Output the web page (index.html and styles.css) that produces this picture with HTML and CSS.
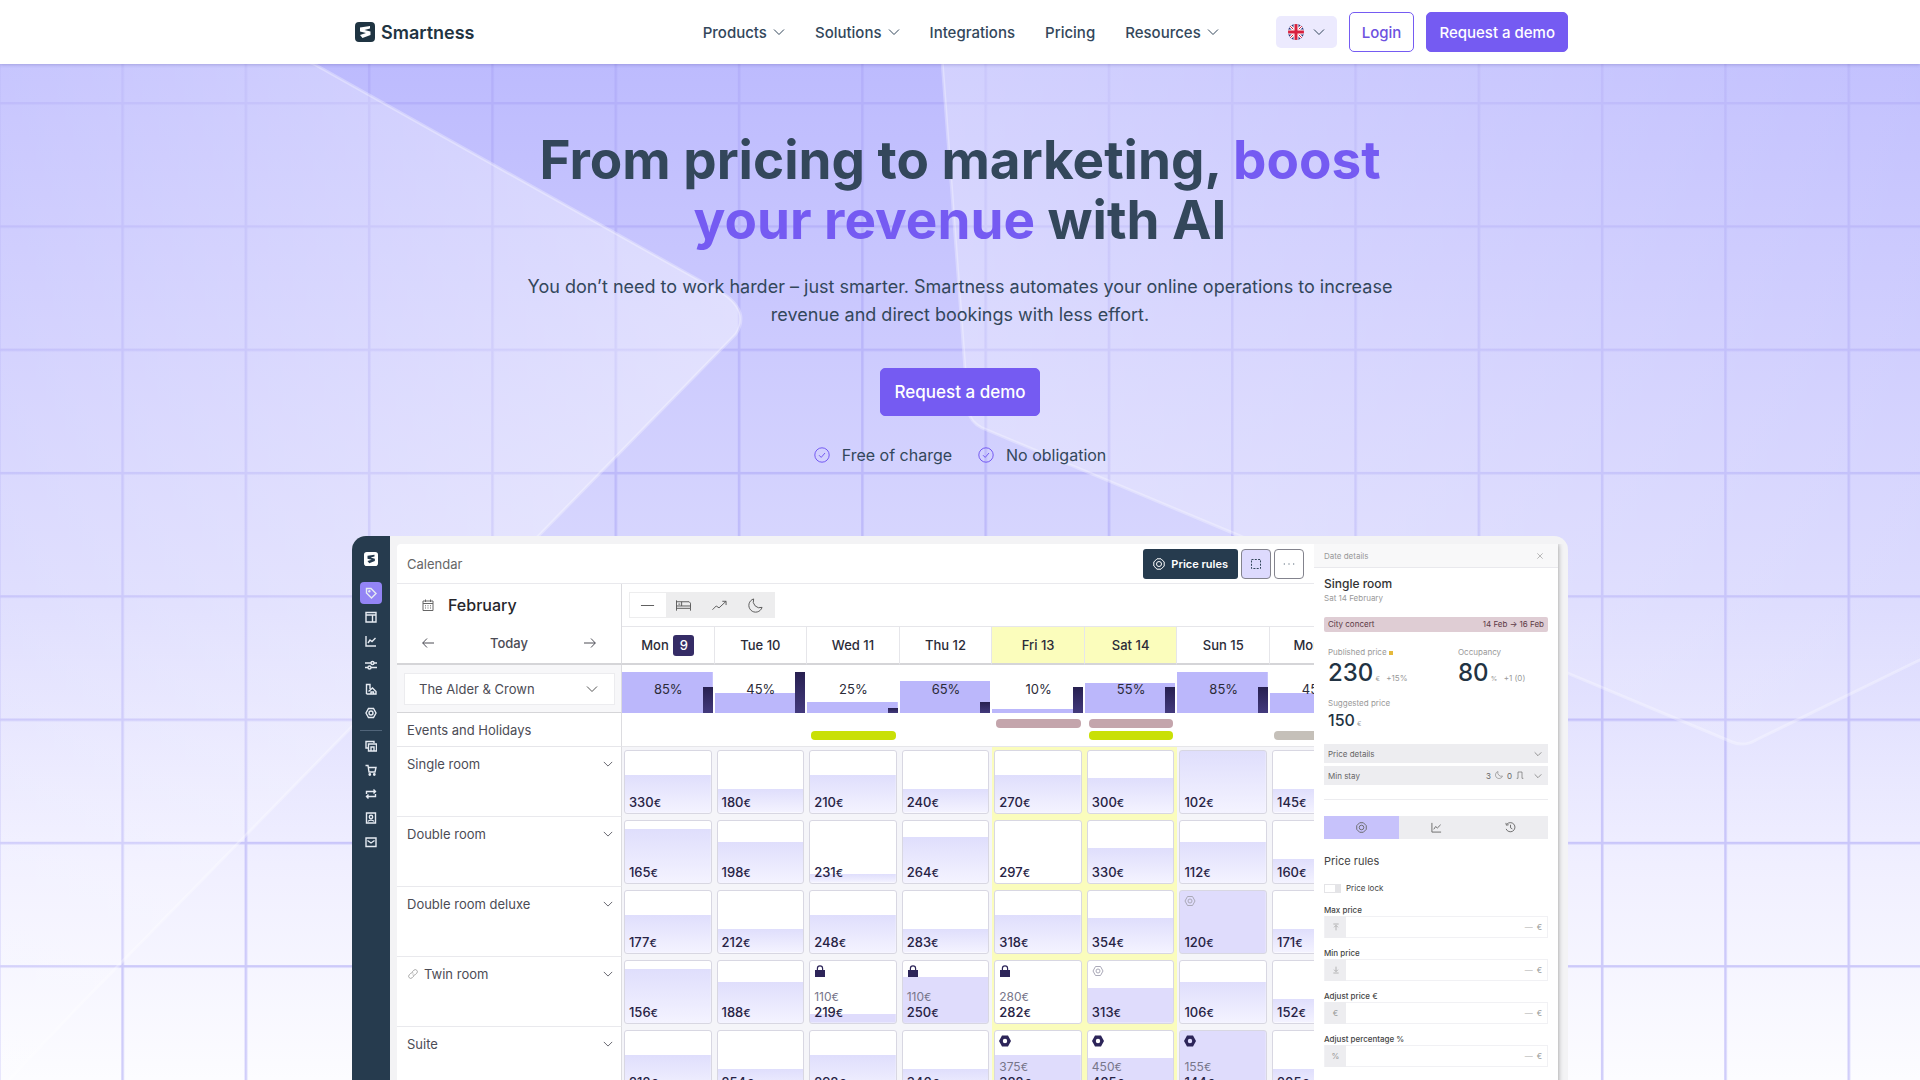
FILE: index.html
```html
<!DOCTYPE html>
<html lang="en">
<head>
    <meta charset="UTF-8">
    <meta name="viewport" content="width=device-width, initial-scale=1.0">
    <title>Smartness</title>
    <link rel="stylesheet" href="styles.css">
</head>
<body>

    <!-- Icons -->
    <svg class="sprite" aria-hidden="true">
        <symbol id="i-logo" viewBox="0 0 20 20"><path fill-rule="evenodd" d="M4 0h12a4 4 0 0 1 4 4v12a4 4 0 0 1-4 4H4a4 4 0 0 1-4-4V4a4 4 0 0 1 4-4zM5 5.500v4l6 1.500-6 2 2.500 3 8-3V9.500L9.500 8 15 6.500V4z"/></symbol>
        <symbol id="i-down" viewBox="0 0 12 12"><path d="M1 3.500l5 5 5-5"/></symbol>
        <symbol id="i-check" viewBox="0 0 16 16"><circle cx="8" cy="8" r="7.200"/><path d="M5 8.200l2.200 2.200L11 6"/></symbol>
        <symbol id="i-tag" viewBox="0 0 12 12"><path d="M1.500 1.500h4.500l5 5-4.500 4.500-5-5z"/><circle cx="4.300" cy="4.300" r=".6"/></symbol>
        <symbol id="i-layout" viewBox="0 0 12 12"><path d="M1 1.500h10v9.500H1zM1 4h10M7.500 4v7"/></symbol>
        <symbol id="i-chart" viewBox="0 0 12 12"><path d="M1 1v10h10M3 8l2-3 2 1.500L10.500 3"/></symbol>
        <symbol id="i-sliders" viewBox="0 0 12 12"><path d="M0 4h6M9 4h3M0 8.500h3M6 8.500h6"/><circle cx="7.500" cy="4" r="1.500"/><circle cx="4.500" cy="8.500" r="1.500"/></symbol>
        <symbol id="i-house" viewBox="0 0 12 12"><path d="M1.500 11V1.500H5V6M3.500 8.500L7.500 5l3.500 3.500V11H1.500M6 11V9h2.500v2"/></symbol>
        <symbol id="i-gear" viewBox="0 0 12 12"><path d="M3.500 1.500h5L11 6l-2.500 4.500h-5L1 6z"/><circle cx="6" cy="6" r="2"/></symbol>
        <symbol id="i-target" viewBox="0 0 12 12"><path d="M4 .800h4L11.200 4v4L8 11.200H4L.800 8V4z"/><circle cx="6" cy="6" r="2.500"/></symbol>
        <symbol id="i-copy" viewBox="0 0 12 12"><path d="M3 8H1V1.500h8V3M3.500 4h8v7h-8zM6 11V7h3v4"/></symbol>
        <symbol id="i-cart" viewBox="0 0 12 12"><path d="M.500 1.500H3L4 8h6l1-4.500H3.400"/><circle cx="4.800" cy="10.500" r=".7"/><circle cx="9.300" cy="10.500" r=".7"/></symbol>
        <symbol id="i-repeat" viewBox="0 0 12 12"><path d="M1.500 6V3.500h9M8.500 1.500l2 2-2 2M10.500 6v2.500h-9M3.500 6.500l-2 2 2 2"/></symbol>
        <symbol id="i-contact" viewBox="0 0 12 12"><path d="M1.500 1h9v10h-9z"/><circle cx="6" cy="5" r="1.700"/><path d="M3 9.500c1-1.800 5-1.800 6 0"/></symbol>
        <symbol id="i-mail" viewBox="0 0 12 12"><path d="M1 2h10v8.500H1zM2.500 4.500L6 7l3.500-2.500"/></symbol>
        <symbol id="i-calendar" viewBox="0 0 12 12"><path d="M1 2h10v9.500H1zM1 4.500h10M3.500.500v2.500M8.500.500v2.500M3 6.800h1M5.500 6.800h1M8 6.800h1M3 9h1M5.500 9h1M8 9h1"/></symbol>
        <symbol id="i-left" viewBox="0 0 12 12"><path d="M12 6H.700M5 1.500L.700 6 5 10.500"/></symbol>
        <symbol id="i-right" viewBox="0 0 12 12"><path d="M0 6h11.300M7 1.500L11.300 6 7 10.500"/></symbol>
        <symbol id="i-minus" viewBox="0 0 16 16"><path d="M1 8h14"/></symbol>
        <symbol id="i-bed" viewBox="0 0 16 16"><path d="M.500 2.500v11M.500 11h15v2.500M15.500 11V5.500L14 4H.500M.500 8.500h15M6 4v4.500M2.500 6.500h2"/></symbol>
        <symbol id="i-trend" viewBox="0 0 16 16"><path d="M.500 12.500l4-4 3 2L15 3.500M11 3.500h4v4"/></symbol>
        <symbol id="i-moon" viewBox="0 0 16 16"><path d="M6 1a7.200 7.200 0 1 0 9 9A7 7 0 0 1 6 1z"/></symbol>
        <symbol id="i-select" viewBox="0 0 12 12"><path stroke-dasharray="2 1.300" d="M1.500 1.500h9v9h-9z"/></symbol>
        <symbol id="i-more" viewBox="0 0 12 12"><path d="M.800 6h1M5.500 6h1M10.200 6h1"/></symbol>
        <symbol id="i-close" viewBox="0 0 12 12"><path d="M2 2l8 8M10 2l-8 8"/></symbol>
        <symbol id="i-lock" viewBox="0 0 12 12"><path d="M1 5h10v7H1zM2.800 5V3.500a3.200 3.200 0 0 1 6.400 0V5H8V3.500a2 2 0 0 0-4 0V5z"/></symbol>
        <symbol id="i-nut" viewBox="0 0 12 12"><path fill-rule="evenodd" d="M3 .500h6L12 6l-3 5.500H3L0 6zM6 3.800a2.200 2.200 0 1 0 0 4.400 2.200 2.200 0 0 0 0-4.400z"/></symbol>
        <symbol id="i-link" viewBox="0 0 12 12"><path d="M5 3.500l2-2a2.300 2.300 0 0 1 3.500 3.500l-2 2a2.300 2.300 0 0 1-3 0M7 8.500l-2 2A2.300 2.300 0 0 1 1.500 7l2-2a2.300 2.300 0 0 1 3 0"/></symbol>
        <symbol id="i-history" viewBox="0 0 12 12"><path d="M2 2.500A5 5 0 1 1 1.200 7.500M1 1l.500 2.500L4 3M6 3v3.300l2 1.200"/></symbol>
        <symbol id="i-max" viewBox="0 0 12 12"><path d="M2 1.500h8M6 11V4M3 6.500L6 3.500l3 3"/></symbol>
        <symbol id="i-min" viewBox="0 0 12 12"><path d="M2 10.500h8M6 1v7M3 5.500l3 3 3-3"/></symbol>
        <symbol id="i-door" viewBox="0 0 12 12"><path d="M3 11V1.500h6V11M1 11h2M9 11h2"/></symbol>
    </svg>

    <header class="header">
        <div class="header-inner">
            <a class="logo" href="#"><svg class="logo-mark"><use href="#i-logo"/></svg>Smartness</a>
            <nav class="nav">
                <a href="#">Products <svg class="icon"><use href="#i-down"/></svg></a>
                <a href="#">Solutions <svg class="icon"><use href="#i-down"/></svg></a>
                <a href="#">Integrations</a>
                <a href="#">Pricing</a>
                <a href="#">Resources <svg class="icon"><use href="#i-down"/></svg></a>
            </nav>
            <div class="actions">
                <button type="button" class="lang" aria-label="English">
                    <svg class="flag" viewBox="0 0 16 16">
                        <clipPath id="round"><circle cx="8" cy="8" r="8"/></clipPath>
                        <g clip-path="url(#round)">
                            <path class="flag-field" d="M0 0h16v16H0z"/>
                            <path stroke="#fff" stroke-width="3" d="M0 0l16 16M16 0L0 16"/>
                            <path stroke="#d8203f" stroke-width="1" d="M0 0l16 16M16 0L0 16"/>
                            <path stroke="#fff" stroke-width="5" d="M8 0v16M0 8h16"/>
                            <path stroke="#d8203f" stroke-width="3" d="M8 0v16M0 8h16"/>
                        </g>
                    </svg>
                    <svg class="icon"><use href="#i-down"/></svg>
                </button>
                <a class="btn btn-outline" href="#">Login</a>
                <a class="btn" href="#">Request a demo</a>
            </div>
        </div>
    </header>

    <main class="hero">
        <svg class="hero-bg" viewBox="0 0 1920 1016" preserveAspectRatio="xMidYMin slice" aria-hidden="true">
            <defs>
                <pattern id="grid" x="-2" y="38" width="123.300" height="123.300" patternUnits="userSpaceOnUse">
                    <path fill="none" stroke="#aaa6f6" stroke-opacity=".55" stroke-width="2.500" d="M0 1.300h123.300M1.300 0v123.300"/>
                </pattern>
                <linearGradient id="pane-left" x1="0" y1="0" x2="1" y2="0">
                    <stop offset="0" stop-color="#fff" stop-opacity=".15"/>
                    <stop offset="1" stop-color="#fff" stop-opacity=".42"/>
                </linearGradient>
                <linearGradient id="pane-right" x1="0" y1="0" x2="1" y2="0">
                    <stop offset="0" stop-color="#fff" stop-opacity=".32"/>
                    <stop offset="1" stop-color="#fff" stop-opacity=".08"/>
                </linearGradient>
            </defs>
            <rect width="1920" height="1016" fill="url(#grid)" stroke="none"/>
            <path class="pane" fill="url(#pane-left)" d="M-10-116L314 0l410 230q26 18 12 40L75 946-10 1036z"/>
            <path class="pane" fill="url(#pane-right)" d="M942-4l26 350q2 12 14 18l258 108 492 206q12 5 24-2L1930 591V-4z"/>
        </svg>

        <h1>From pricing to marketing, <span>boost</span><br><span>your revenue</span> with AI</h1>
        <p class="lead">You don’t need to work harder – just smarter. Smartness automates your online operations to increase<br>revenue and direct bookings with less effort.</p>
        <a class="btn btn-large" href="#">Request a demo</a>
        <ul class="perks">
            <li><svg><use href="#i-check"/></svg>Free of charge</li>
            <li><svg><use href="#i-check"/></svg>No obligation</li>
        </ul>

        <div class="app">
            <nav class="sidebar">
                <a class="sidebar-logo" href="#" aria-label="Home"><svg><use href="#i-logo"/></svg></a>
                <a class="active" href="#" aria-label="Pricing"><svg><use href="#i-tag"/></svg></a>
                <a href="#" aria-label="Layout"><svg><use href="#i-layout"/></svg></a>
                <a href="#" aria-label="Reports"><svg><use href="#i-chart"/></svg></a>
                <a href="#" aria-label="Strategy"><svg><use href="#i-sliders"/></svg></a>
                <a href="#" aria-label="Properties"><svg><use href="#i-house"/></svg></a>
                <a href="#" aria-label="Settings"><svg><use href="#i-gear"/></svg></a>
                <hr>
                <a href="#" aria-label="Rates"><svg><use href="#i-copy"/></svg></a>
                <a href="#" aria-label="Shop"><svg><use href="#i-cart"/></svg></a>
                <a href="#" aria-label="Sync"><svg><use href="#i-repeat"/></svg></a>
                <a href="#" aria-label="Guests"><svg><use href="#i-contact"/></svg></a>
                <a href="#" aria-label="Messages"><svg><use href="#i-mail"/></svg></a>
            </nav>

            <section class="calendar">
                <div class="topbar">
                    <span class="topbar-title">Calendar</span>
                    <button type="button" class="rules"><svg><use href="#i-target"/></svg>Price rules</button>
                    <button type="button" class="square on" aria-label="Select dates"><svg><use href="#i-select"/></svg></button>
                    <button type="button" class="square" aria-label="More"><svg><use href="#i-more"/></svg></button>
                </div>

                <table>
                    <thead>
                        <tr class="tools">
                            <th class="side"><div class="month"><svg><use href="#i-calendar"/></svg>February</div></th>
                            <td colspan="8">
                                <div class="modes">
                                    <button type="button" class="on" aria-label="None"><svg><use href="#i-minus"/></svg></button>
                                    <button type="button" aria-label="Rooms"><svg><use href="#i-bed"/></svg></button>
                                    <button type="button" aria-label="Trend"><svg><use href="#i-trend"/></svg></button>
                                    <button type="button" aria-label="Nights"><svg><use href="#i-moon"/></svg></button>
                                </div>
                            </td>
                        </tr>
                        <tr class="days">
                            <th class="side">
                                <div class="pager">
                                    <button type="button" aria-label="Previous"><svg><use href="#i-left"/></svg></button>
                                    <button type="button">Today</button>
                                    <button type="button" aria-label="Next"><svg><use href="#i-right"/></svg></button>
                                </div>
                            </th>
                            <th>Mon <span class="today">9</span></th>
                            <th>Tue 10</th>
                            <th>Wed 11</th>
                            <th>Thu 12</th>
                            <th class="weekend">Fri 13</th>
                            <th class="weekend">Sat 14</th>
                            <th>Sun 15</th>
                            <th>Mon 16</th>
                        </tr>
                    </thead>
                    <tbody>
                        <tr class="occupancy">
                            <th class="side">
                                <select aria-label="Property"><option>The Alder &amp; Crown</option></select>
                            </th>
                            <td><div class="occ" style="--fill: 41px"><span>85%</span><i style="height: 26px"></i></div></td>
                            <td><div class="occ" style="--fill: 20px"><span>45%</span><i style="height: 41px"></i></div></td>
                            <td><div class="occ" style="--fill: 11px"><span>25%</span><i style="height: 5px"></i></div></td>
                            <td><div class="occ" style="--fill: 32px"><span>65%</span><i style="height: 11px"></i></div></td>
                            <td><div class="occ" style="--fill: 4px"><span>10%</span><i style="height: 26px"></i></div></td>
                            <td><div class="occ" style="--fill: 30px"><span>55%</span><i style="height: 26px"></i></div></td>
                            <td><div class="occ" style="--fill: 41px"><span>85%</span><i style="height: 26px"></i></div></td>
                            <td><div class="occ" style="--fill: 20px"><span>45%</span><i style="height: 41px"></i></div></td>
                        </tr>
                        <tr class="events">
                            <th class="side">Events and Holidays</th>
                            <td></td>
                            <td></td>
                            <td><div class="event"></div><div class="event green"></div></td>
                            <td></td>
                            <td><div class="event pink"></div><div class="event"></div></td>
                            <td><div class="event pink"></div><div class="event green"></div></td>
                            <td></td>
                            <td><div class="event"></div><div class="event grey"></div></td>
                        </tr>
                        <tr class="room">
                            <th class="side"><div>Single room <svg><use href="#i-down"/></svg></div></th>
                            <td><div class="cell" style="--fill: 61%"><b>330<small>€</small></b></div></td>
                            <td><div class="cell" style="--fill: 38%"><b>180<small>€</small></b></div></td>
                            <td><div class="cell" style="--fill: 61%"><b>210<small>€</small></b></div></td>
                            <td><div class="cell" style="--fill: 38%"><b>240<small>€</small></b></div></td>
                            <td class="weekend"><div class="cell" style="--fill: 61%"><b>270<small>€</small></b></div></td>
                            <td class="weekend"><div class="cell" style="--fill: 56%"><b>300<small>€</small></b></div></td>
                            <td><div class="cell" style="--fill: 100%"><b>102<small>€</small></b></div></td>
                            <td><div class="cell" style="--fill: 38%"><b>145<small>€</small></b></div></td>
                        </tr>
                        <tr class="room">
                            <th class="side"><div>Double room <svg><use href="#i-down"/></svg></div></th>
                            <td><div class="cell" style="--fill: 87%"><b>165<small>€</small></b></div></td>
                            <td><div class="cell" style="--fill: 66%"><b>198<small>€</small></b></div></td>
                            <td><div class="cell" style="--fill: 14%"><b>231<small>€</small></b></div></td>
                            <td><div class="cell" style="--fill: 74%"><b>264<small>€</small></b></div></td>
                            <td class="weekend"><div class="cell" style="--fill: 0%"><b>297<small>€</small></b></div></td>
                            <td class="weekend"><div class="cell" style="--fill: 56%"><b>330<small>€</small></b></div></td>
                            <td><div class="cell" style="--fill: 66%"><b>112<small>€</small></b></div></td>
                            <td><div class="cell" style="--fill: 39%"><b>160<small>€</small></b></div></td>
                        </tr>
                        <tr class="room">
                            <th class="side"><div>Double room deluxe <svg><use href="#i-down"/></svg></div></th>
                            <td><div class="cell" style="--fill: 61%"><b>177<small>€</small></b></div></td>
                            <td><div class="cell" style="--fill: 38%"><b>212<small>€</small></b></div></td>
                            <td><div class="cell" style="--fill: 61%"><b>248<small>€</small></b></div></td>
                            <td><div class="cell" style="--fill: 38%"><b>283<small>€</small></b></div></td>
                            <td class="weekend"><div class="cell" style="--fill: 61%"><b>318<small>€</small></b></div></td>
                            <td class="weekend"><div class="cell" style="--fill: 56%"><b>354<small>€</small></b></div></td>
                            <td><div class="cell solid" style="--fill: 100%"><svg class="line"><use href="#i-gear"/></svg><b>120<small>€</small></b></div></td>
                            <td><div class="cell" style="--fill: 38%"><b>171<small>€</small></b></div></td>
                        </tr>
                        <tr class="room">
                            <th class="side"><div><svg class="link"><use href="#i-link"/></svg>Twin room <svg><use href="#i-down"/></svg></div></th>
                            <td><div class="cell" style="--fill: 87%"><b>156<small>€</small></b></div></td>
                            <td><div class="cell" style="--fill: 66%"><b>188<small>€</small></b></div></td>
                            <td><div class="cell solid" style="--fill: 14%"><svg><use href="#i-lock"/></svg><s>110<small>€</small></s><b>219<small>€</small></b></div></td>
                            <td><div class="cell solid" style="--fill: 74%"><svg><use href="#i-lock"/></svg><s>110<small>€</small></s><b>250<small>€</small></b></div></td>
                            <td class="weekend"><div class="cell" style="--fill: 0%"><svg><use href="#i-lock"/></svg><s>280<small>€</small></s><b>282<small>€</small></b></div></td>
                            <td class="weekend"><div class="cell solid" style="--fill: 56%"><svg class="line"><use href="#i-gear"/></svg><b>313<small>€</small></b></div></td>
                            <td><div class="cell" style="--fill: 66%"><b>106<small>€</small></b></div></td>
                            <td><div class="cell" style="--fill: 38%"><b>152<small>€</small></b></div></td>
                        </tr>
                        <tr class="room">
                            <th class="side"><div>Suite <svg><use href="#i-down"/></svg></div></th>
                            <td><div class="cell" style="--fill: 61%"><b>212<small>€</small></b></div></td>
                            <td><div class="cell" style="--fill: 38%"><b>254<small>€</small></b></div></td>
                            <td><div class="cell" style="--fill: 61%"><b>298<small>€</small></b></div></td>
                            <td><div class="cell" style="--fill: 38%"><b>340<small>€</small></b></div></td>
                            <td class="weekend"><div class="cell solid" style="--fill: 61%"><svg><use href="#i-nut"/></svg><s>375<small>€</small></s><b>382<small>€</small></b></div></td>
                            <td class="weekend"><div class="cell solid" style="--fill: 56%"><svg><use href="#i-nut"/></svg><s>450<small>€</small></s><b>425<small>€</small></b></div></td>
                            <td><div class="cell solid" style="--fill: 100%"><svg><use href="#i-nut"/></svg><s>155<small>€</small></s><b>144<small>€</small></b></div></td>
                            <td><div class="cell" style="--fill: 38%"><b>205<small>€</small></b></div></td>
                        </tr>
                    </tbody>
                </table>
            </section>

            <aside class="details">
                <div class="details-head">Date details <button type="button" aria-label="Close"><svg><use href="#i-close"/></svg></button></div>
                <div class="details-body">
                    <h2>Single room</h2>
                    <p class="date">Sat 14 February</p>
                    <div class="concert"><span>City concert</span><span>14 Feb → 16 Feb</span></div>

                    <div class="stats">
                        <div>
                            <p>Published price <i class="dot"></i></p>
                            <strong>230</strong> <small>€</small> <em>+15%</em>
                        </div>
                        <div>
                            <p>Occupancy</p>
                            <strong>80</strong> <small>%</small> <em>+1 (0)</em>
                        </div>
                        <div class="suggested">
                            <p>Suggested price</p>
                            <strong>150</strong> <small>€</small>
                        </div>
                    </div>

                    <button type="button" class="fold">Price details <svg><use href="#i-down"/></svg></button>
                    <button type="button" class="fold">Min stay <span>3 <svg><use href="#i-moon"/></svg> 0 <svg><use href="#i-door"/></svg></span><svg><use href="#i-down"/></svg></button>
                    <hr>

                    <div class="tabs">
                        <button type="button" class="on" aria-label="Rules"><svg><use href="#i-target"/></svg></button>
                        <button type="button" aria-label="Chart"><svg><use href="#i-chart"/></svg></button>
                        <button type="button" aria-label="History"><svg><use href="#i-history"/></svg></button>
                    </div>

                    <h3>Price rules</h3>
                    <label class="switch"><input type="checkbox">Price lock</label>

                    <label class="field-label" for="max">Max price</label>
                    <div class="field"><span><svg><use href="#i-max"/></svg></span><input type="text" id="max" placeholder="—"> €</div>
                    <label class="field-label" for="min">Min price</label>
                    <div class="field"><span><svg><use href="#i-min"/></svg></span><input type="text" id="min" placeholder="—"> €</div>
                    <label class="field-label" for="adjust">Adjust price €</label>
                    <div class="field"><span>€</span><input type="text" id="adjust" placeholder="—"> €</div>
                    <label class="field-label" for="percent">Adjust percentage %</label>
                    <div class="field"><span>%</span><input type="text" id="percent" placeholder="—"> €</div>
                </div>
            </aside>
        </div>
    </main>

</body>
</html>
```
FILE: styles.css
```css
* {
    margin: 0;
    padding: 0;
    box-sizing: border-box;
}

body {
    font-family: "Inter", "Liberation Sans", sans-serif;
    color: #33475b;
    background: #fff;
}

a {
    color: inherit;
    text-decoration: none;
}

button, input, select {
    font: inherit;
    color: inherit;
    background: none;
    border: none;
}

button {
    cursor: pointer;
}

svg {
    fill: none;
    stroke: currentColor;
    flex: none;
}

.sprite {
    display: none;
}

.icon {
    width: 12px;
    height: 12px;
}

/* Header */
.header {
    background: #fff;
    box-shadow: 0 1px 3px rgba(60, 50, 140, 0.25);
    position: relative;
    z-index: 2;
}

.header-inner {
    max-width: 1216px;
    height: 64px;
    margin: 0 auto;
    display: flex;
    align-items: center;
}

.logo {
    display: flex;
    align-items: center;
    gap: 6px;
    margin-left: 3px;
    font-size: 18px;
    font-weight: 600;
    color: #1f3442;
}

.logo-mark {
    width: 20px;
    height: 20px;
    fill: #1f3442;
    stroke: none;
}

.nav {
    display: flex;
    gap: 30px;
    margin-left: auto;
    margin-right: 57px;
    font-size: 15px;
    font-weight: 500;
}

.nav a {
    display: flex;
    align-items: center;
    gap: 6px;
}

.actions {
    display: flex;
    align-items: center;
    gap: 12px;
}

.lang {
    display: flex;
    align-items: center;
    gap: 9px;
    height: 32px;
    padding: 0 12px;
    border-radius: 5px;
    background: #eceafe;
}

.flag {
    width: 16px;
    height: 16px;
}

.flag-field {
    fill: #29337a;
    stroke: none;
}

.btn {
    display: flex;
    align-items: center;
    justify-content: center;
    height: 40px;
    padding: 0 12px;
    border: 1px solid #755bf2;
    border-radius: 5px;
    background: #755bf2;
    color: #fff;
    font-size: 15px;
    font-weight: 500;
}

.btn-outline {
    background: #fff;
    color: #6d52e0;
}

.btn-large {
    width: 160px;
    height: 48px;
    margin: 39px auto 25px;
    font-size: 17px;
}

/* Hero */
.hero {
    position: relative;
    padding: 66px 16px 0;
    overflow: hidden;
    background: linear-gradient(#bdbbfe, #cac8fe 240px, #dad9fe 540px, #f0efff 800px, #fcfcff 1016px);
}

.hero-bg {
    position: absolute;
    top: 0;
    left: 0;
    width: 100%;
    height: 1016px;
}

.pane {
    stroke: #fff;
    stroke-opacity: 0.3;
    stroke-width: 3px;
}

.hero > :not(.hero-bg) {
    position: relative;
}

h1 {
    text-align: center;
    font-size: 53px;
    line-height: 60px;
    font-weight: 700;
}

h1 span {
    color: #755bf2;
}

.lead {
    margin-top: 23px;
    text-align: center;
    font-size: 18px;
    line-height: 28px;
}

.perks {
    display: flex;
    justify-content: center;
    gap: 26px;
    list-style: none;
    font-size: 16px;
    line-height: 28px;
}

.perks li {
    display: flex;
    align-items: center;
    gap: 12px;
}

.perks svg {
    width: 16px;
    height: 16px;
    color: #755bf2;
}

/* App preview */
.app {
    display: flex;
    max-width: 1216px;
    margin: 67px auto 0;
    padding-right: 10px;
    border-radius: 14px 14px 0 0;
    overflow: hidden;
    background: #f3f3f5;
}

.sidebar {
    width: 38px;
    flex: none;
    display: flex;
    flex-direction: column;
    align-items: center;
    padding-top: 16px;
    background: #263b4e;
    color: #e6ebf2;
}

.sidebar a {
    display: flex;
    align-items: center;
    justify-content: center;
    width: 22px;
    height: 22px;
    margin-bottom: 2px;
    border-radius: 4px;
}

.sidebar svg {
    width: 12px;
    height: 12px;
    stroke-width: 1.4px;
}

.sidebar a.sidebar-logo {
    height: 14px;
    margin-bottom: 16px;
}

.sidebar-logo svg {
    width: 14px;
    height: 14px;
    fill: #fff;
    stroke: none;
}

.sidebar a.active {
    background: #9384f5;
}

.sidebar hr {
    width: 22px;
    margin: 4px 0;
    border: none;
    border-top: 1px solid #51657a;
}

.calendar {
    flex: 1;
    min-width: 0;
    margin: 8px 0 0 7px;
    overflow: hidden;
    border-top-left-radius: 4px;
    background: #fff;
    font-size: 13px;
}

.topbar {
    display: flex;
    align-items: center;
    gap: 3px;
    height: 40px;
    padding: 0 10px;
    border-bottom: 1px solid #e9e9ed;
}

.topbar-title {
    margin-right: auto;
    color: #666;
}

.rules {
    display: flex;
    align-items: center;
    gap: 6px;
    height: 30px;
    padding: 0 10px;
    border-radius: 3px;
    background: #263b4e;
    color: #fff;
    font-size: 11px;
    font-weight: 600;
}

.rules svg {
    width: 12px;
    height: 12px;
}

.square {
    display: flex;
    align-items: center;
    justify-content: center;
    width: 30px;
    height: 30px;
    border: 1px solid #83838d;
    border-radius: 4px;
}

.square.on {
    background: #dddafd;
}

.square svg {
    width: 12px;
    height: 12px;
}

/* the last day runs out under the details panel */
table {
    width: 105.3%;
    table-layout: fixed;
    border-collapse: separate;
    border-spacing: 0;
}

th, td {
    font-weight: 500;
    color: #2b2b38;
    vertical-align: middle;
    text-align: center;
}

.side {
    width: 23.3%;
    padding-left: 10px;
    border-right: 1px solid #dcdce0;
    text-align: left;
    font-weight: 400;
    color: #4c4c55;
}

.tools th, .tools td {
    height: 42px;
}

.month {
    display: flex;
    align-items: center;
    gap: 14px;
    padding-left: 15px;
    font-size: 16px;
    font-weight: 500;
    color: #26262c;
}

.month svg {
    width: 12px;
    height: 12px;
    color: #666;
}

.modes {
    display: inline-flex;
    margin-left: 7px;
    padding: 1px;
    background: #ededee;
}

.tools td {
    text-align: left;
}

.modes button {
    display: flex;
    align-items: center;
    justify-content: center;
    width: 36px;
    height: 24px;
    color: #555;
}

.modes .on {
    background: #fff;
}

.modes svg {
    width: 15px;
    height: 15px;
}

.days th {
    height: 39px;
    border-bottom: 2px solid #d5d5d8;
}

.days th + th {
    border-top: 1px solid #e6e6ea;
    border-right: 1px solid #e6e6ea;
}

.days .weekend {
    background: #fbfdbc;
}

.today {
    display: inline-block;
    width: 21px;
    margin-left: 1px;
    border-radius: 3px;
    background: #352c66;
    color: #fff;
    line-height: 21px;
}

.pager {
    display: flex;
    justify-content: space-between;
    padding: 0 25px 3px 15px;
}

.pager button {
    display: flex;
    align-items: center;
    font-weight: 500;
}

.pager svg {
    width: 12px;
    height: 12px;
}

.occupancy .side {
    padding: 0 6px 0 7px;
    background: #f7f7f9;
    border-bottom: 1px solid #d5d5d8;
}

.occupancy th, .occupancy td {
    height: 48px;
    vertical-align: bottom;
}

.occupancy th.side {
    vertical-align: middle;
}

.occupancy select {
    display: block;
    appearance: none;
    width: 100%;
    height: 32px;
    padding: 0 14px;
    border: 1px solid #ececef;
    background: #fff url("data:image/svg+xml,%3Csvg xmlns='http://www.w3.org/2000/svg' viewBox='0 0 12 12'%3E%3Cpath d='M1 3.5l5 5 5-5' fill='none' stroke='%23555'/%3E%3C/svg%3E") no-repeat right 16px center / 12px;
}

.occ {
    display: flex;
    height: 41px;
    margin-right: 2px;
    background: linear-gradient(#bbb7fb, #bbb7fb) no-repeat bottom / 100% var(--fill);
}

.occ span {
    flex: 1;
    padding-left: 12px;
    line-height: 34px;
    font-weight: 400;
}

.occ i {
    width: 10px;
    align-self: flex-end;
    background: linear-gradient(#272050, #433a7d);
}

.events th, .events td {
    height: 34px;
    border-bottom: 1px solid #e6e6ea;
}

.event {
    height: 9px;
    margin: 3px 4px;
    border-radius: 4px;
}

.pink {
    background: #c4a5ac;
}

.green {
    background: #c9e006;
}

.grey {
    background: #c5c0b9;
}

.room th, .room td {
    height: 70px;
}

.room .side {
    vertical-align: top;
    border-bottom: 1px solid #e9e9ed;
}

.room .side div {
    display: flex;
    align-items: center;
    height: 34px;
    padding-right: 8px;
}

.room .side svg {
    width: 10px;
    height: 10px;
    margin-left: auto;
}

.room .side .link {
    margin: 0 6px 0 1px;
    color: #999;
}

.room td {
    padding: 0 3px 0 2px;
    background: #f5f5f9;
}

.room .weekend {
    background: #fafcbc;
}

.cell {
    display: flex;
    flex-direction: column;
    align-items: flex-start;
    height: 64px;
    padding: 4px 4px 2px;
    border: 1px solid #d8d7e2;
    border-radius: 3px;
    background: linear-gradient(#dfdefc, #f4f3ff) no-repeat bottom / 100% var(--fill) #fff;
    line-height: 15px;
    color: #262244;
}

.cell.solid {
    background-image: linear-gradient(#dfdcfc, #dfdcfc);
}

.cell svg {
    width: 12px;
    height: 12px;
    fill: #2d2559;
    stroke: none;
    margin-bottom: 12px;
}

.cell .line {
    fill: none;
    stroke: #aaa9b8;
}

.cell b {
    margin-top: auto;
    font-weight: 500;
}

.cell s {
    text-decoration: none;
    font-size: 12px;
    font-weight: 400;
    color: #77768a;
}

.cell small {
    font-size: 11px;
}

/* Date details */
.details {
    width: 244px;
    flex: none;
    margin-top: 8px;
    background: #fff;
    box-shadow: 0 0 5px rgba(0, 0, 0, 0.4);
    font-size: 8px;
    color: #666;
    clip-path: inset(0 -8px 0 0);
}

.details-head {
    display: flex;
    justify-content: space-between;
    align-items: center;
    height: 24px;
    padding: 0 14px 0 10px;
    border-bottom: 1px solid #e9e9ed;
    background: #f8f8f9;
    color: #999;
}

.details svg {
    display: block;
    width: 8px;
    height: 8px;
}

.details-body {
    padding: 8px 10px 0;
}

h2 {
    font-size: 12px;
    line-height: 16px;
    font-weight: 500;
    color: #333;
}

.date {
    line-height: 12px;
    color: #999;
}

.concert {
    display: flex;
    justify-content: space-between;
    margin-top: 13px;
    padding: 0 4px;
    border-radius: 2px;
    background: #dfcdd4;
    color: #5c3a45;
    line-height: 15px;
}

.stats {
    display: grid;
    grid-template-columns: 130px 1fr;
    margin: 14px 4px 0;
    color: #999;
}

.stats p {
    line-height: 12px;
}

.stats strong {
    font-size: 24px;
    line-height: 30px;
    font-weight: 500;
    color: #223343;
}

.stats em {
    margin-left: 4px;
    font-style: normal;
}

.stats .suggested {
    margin-top: 9px;
}

.suggested strong {
    font-size: 16px;
    line-height: 22px;
}

.dot {
    display: inline-block;
    width: 4px;
    height: 4px;
    background: #e5b93c;
}

.fold {
    display: flex;
    align-items: center;
    justify-content: space-between;
    width: 100%;
    height: 19px;
    margin-bottom: 3px;
    padding: 0 6px 0 4px;
    background: #ededf0;
}

.stats + .fold {
    margin-top: 13px;
}

.fold span {
    display: flex;
    gap: 4px;
    margin-left: auto;
    margin-right: 10px;
}

.details-body hr {
    margin-top: 14px;
    border: none;
    border-top: 1px solid #ececef;
}

.tabs {
    display: flex;
    margin-top: 16px;
    background: #ededf0;
}

.tabs button {
    flex: 1;
    height: 23px;
    display: flex;
    align-items: center;
    justify-content: center;
}

.tabs .on {
    background: #c7c2fb;
}

.tabs svg {
    width: 11px;
    height: 11px;
}

h3 {
    margin-top: 14px;
    font-size: 11px;
    line-height: 16px;
    font-weight: 400;
    color: #444;
}

.switch {
    display: flex;
    align-items: center;
    gap: 5px;
    margin-top: 13px;
    line-height: 12px;
    color: #444;
}

.switch input {
    appearance: none;
    width: 17px;
    height: 9px;
    border: 1px solid #e4e4e7;
    border-right-width: 6px;
}

.field-label {
    display: block;
    margin-top: 9px;
    line-height: 12px;
    font-weight: 500;
    color: #444;
}

.switch + .field-label {
    margin-top: 10px;
}

.field {
    display: flex;
    align-items: center;
    gap: 4px;
    height: 22px;
    padding-right: 5px;
    border: 1px solid #f1f1f4;
    color: #999;
}

.field span {
    display: flex;
    align-items: center;
    justify-content: center;
    width: 21px;
    height: 22px;
    background: #ededf0;
}

.field input {
    flex: 1;
    min-width: 0;
    text-align: right;
}

.field input::placeholder {
    color: #bbb;
}
```
